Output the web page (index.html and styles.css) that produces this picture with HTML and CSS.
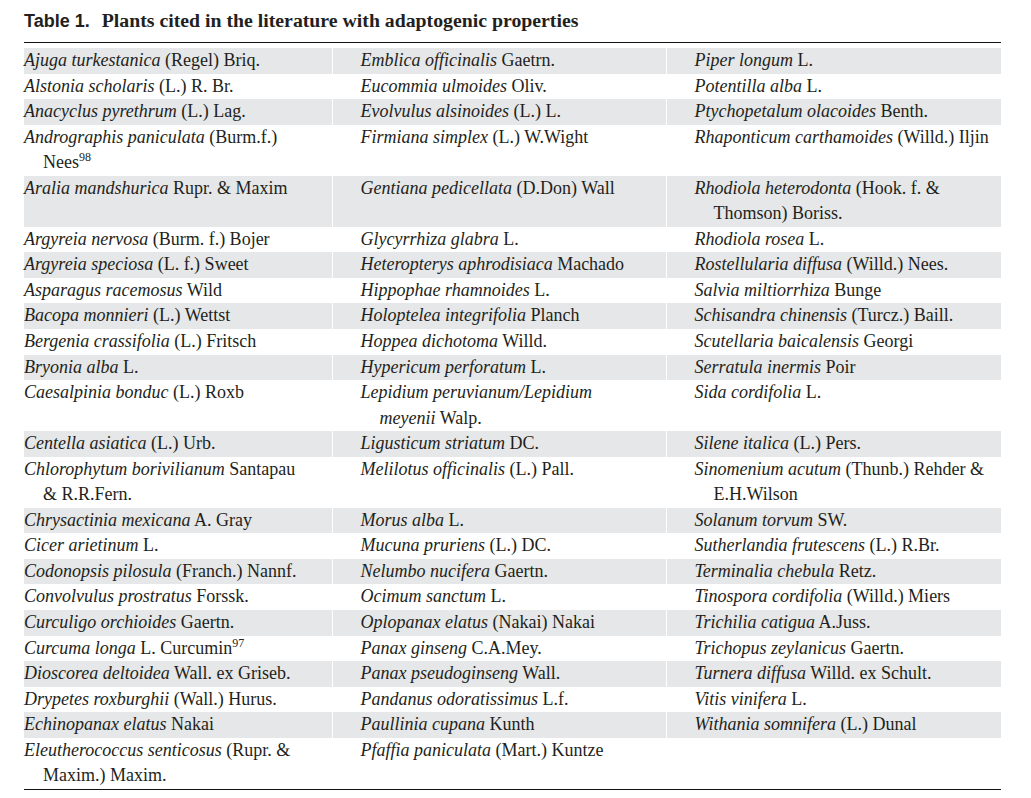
FILE: index.html
```html
<!DOCTYPE html>
<html lang="en">
<head>
<meta charset="utf-8">
<title>Table 1. Plants cited in the literature with adaptogenic properties</title>
<link rel="stylesheet" href="styles.css">
</head>
<body>
<div class="page">
  <h1 class="caption"><span class="label">Table 1.</span><span class="caption-text">Plants cited in the literature with adaptogenic properties</span></h1>
  <div class="rules">
  <table class="plants">
    <colgroup><col class="c1"><col class="c2"><col class="c3"></colgroup>
    <tbody>
      <tr class="shade"><td><i>Ajuga turkestanica</i> (Regel) Briq.</td><td><i>Emblica officinalis</i> Gaetrn.</td><td><i>Piper longum</i> L.</td></tr>
      <tr><td><i>Alstonia scholaris</i> (L.) R. Br.</td><td><i>Eucommia ulmoides</i> Oliv.</td><td><i>Potentilla alba</i> L.</td></tr>
      <tr class="shade"><td><i>Anacyclus pyrethrum</i> (L.) Lag.</td><td><i>Evolvulus alsinoides</i> (L.) L.</td><td><i>Ptychopetalum olacoides</i> Benth.</td></tr>
      <tr><td><i>Andrographis paniculata</i> (Burm.f.)<br>Nees<sup>98</sup></td><td><i>Firmiana simplex</i> (L.) W.Wight</td><td><i>Rhaponticum carthamoides</i> (Willd.) Iljin</td></tr>
      <tr class="shade"><td><i>Aralia mandshurica</i> Rupr. &amp; Maxim</td><td><i>Gentiana pedicellata</i> (D.Don) Wall</td><td><i>Rhodiola heterodonta</i> (Hook. f. &amp;<br>Thomson) Boriss.</td></tr>
      <tr><td><i>Argyreia nervosa</i> (Burm. f.) Bojer</td><td><i>Glycyrrhiza glabra</i> L.</td><td><i>Rhodiola rosea</i> L.</td></tr>
      <tr class="shade"><td><i>Argyreia speciosa</i> (L. f.) Sweet</td><td><i>Heteropterys aphrodisiaca</i> Machado</td><td><i>Rostellularia diffusa</i> (Willd.) Nees.</td></tr>
      <tr><td><i>Asparagus racemosus</i> Wild</td><td><i>Hippophae rhamnoides</i> L.</td><td><i>Salvia miltiorrhiza</i> Bunge</td></tr>
      <tr class="shade"><td><i>Bacopa monnieri</i> (L.) Wettst</td><td><i>Holoptelea integrifolia</i> Planch</td><td><i>Schisandra chinensis</i> (Turcz.) Baill.</td></tr>
      <tr><td><i>Bergenia crassifolia</i> (L.) Fritsch</td><td><i>Hoppea dichotoma</i> Willd.</td><td><i>Scutellaria baicalensis</i> Georgi</td></tr>
      <tr class="shade"><td><i>Bryonia alba</i> L.</td><td><i>Hypericum perforatum</i> L.</td><td><i>Serratula inermis</i> Poir</td></tr>
      <tr><td><i>Caesalpinia bonduc</i> (L.) Roxb</td><td><i>Lepidium peruvianum/Lepidium<br>meyenii</i> Walp.</td><td><i>Sida cordifolia</i> L.</td></tr>
      <tr class="shade"><td><i>Centella asiatica</i> (L.) Urb.</td><td><i>Ligusticum striatum</i> DC.</td><td><i>Silene italica</i> (L.) Pers.</td></tr>
      <tr><td><i>Chlorophytum borivilianum</i> Santapau<br>&amp; R.R.Fern.</td><td><i>Melilotus officinalis</i> (L.) Pall.</td><td><i>Sinomenium acutum</i> (Thunb.) Rehder &amp;<br>E.H.Wilson</td></tr>
      <tr class="shade"><td><i>Chrysactinia mexicana</i> A. Gray</td><td><i>Morus alba</i> L.</td><td><i>Solanum torvum</i> SW.</td></tr>
      <tr><td><i>Cicer arietinum</i> L.</td><td><i>Mucuna pruriens</i> (L.) DC.</td><td><i>Sutherlandia frutescens</i> (L.) R.Br.</td></tr>
      <tr class="shade"><td><i>Codonopsis pilosula</i> (Franch.) Nannf.</td><td><i>Nelumbo nucifera</i> Gaertn.</td><td><i>Terminalia chebula</i> Retz.</td></tr>
      <tr><td><i>Convolvulus prostratus</i> Forssk.</td><td><i>Ocimum sanctum</i> L.</td><td><i>Tinospora cordifolia</i> (Willd.) Miers</td></tr>
      <tr class="shade"><td><i>Curculigo orchioides</i> Gaertn.</td><td><i>Oplopanax elatus</i> (Nakai) Nakai</td><td><i>Trichilia catigua</i> A.Juss.</td></tr>
      <tr><td><i>Curcuma longa</i> L. Curcumin<sup>97</sup></td><td><i>Panax ginseng</i> C.A.Mey.</td><td><i>Trichopus zeylanicus</i> Gaertn.</td></tr>
      <tr class="shade"><td><i>Dioscorea deltoidea</i> Wall. ex Griseb.</td><td><i>Panax pseudoginseng</i> Wall.</td><td><i>Turnera diffusa</i> Willd. ex Schult.</td></tr>
      <tr><td><i>Drypetes roxburghii</i> (Wall.) Hurus.</td><td><i>Pandanus odoratissimus</i> L.f.</td><td><i>Vitis vinifera</i> L.</td></tr>
      <tr class="shade"><td><i>Echinopanax elatus</i> Nakai</td><td><i>Paullinia cupana</i> Kunth</td><td><i>Withania somnifera</i> (L.) Dunal</td></tr>
      <tr><td><i>Eleutherococcus senticosus</i> (Rupr. &amp;<br>Maxim.) Maxim.</td><td><i>Pfaffia paniculata</i> (Mart.) Kuntze</td><td></td></tr>
    </tbody>
  </table>
  </div>
</div>
</body>
</html>
```

FILE: styles.css
```css
html, body {
  margin: 0;
  padding: 0;
  background: #ffffff;
}

.page {
  padding: 9px 0 0 24px;
  width: 977px;
  color: #231f20;
}

.caption {
  margin: 0 0 11px 0;
  height: 22px;
  font-size: 18px;
  line-height: 22px;
  font-weight: bold;
  white-space: nowrap;
}

.label {
  font-family: "Liberation Sans", Arial, sans-serif;
  font-size: 18px;
}

.caption-text {
  font-family: "Liberation Serif", "Times New Roman", serif;
  font-size: 19.8px;
  margin-left: 12px;
}

.rules {
  width: 977px;
  border-top: 1px solid #111;
  border-bottom: 1px solid #111;
  padding-top: 5px;
}

.plants {
  width: 977px;
  table-layout: fixed;
  border-collapse: collapse;
  font-family: "Liberation Serif", "Times New Roman", serif;
  font-size: 18px;
  line-height: 25.55px;
}

.c1 { width: 308px; }
.c2 { width: 334px; }
.c3 { width: 335px; }

.plants td {
  padding: 0 0 0 19px;
  text-indent: -19px;
  vertical-align: top;
  white-space: nowrap;
}

.plants td + td {
  border-left: 1px solid #ffffff;
  padding-left: 47px;
}

.plants tr.shade td {
  background: #e6e7e8;
}

.plants sup {
  font-size: 12px;
  line-height: 0;
  vertical-align: 7px;
}
```
